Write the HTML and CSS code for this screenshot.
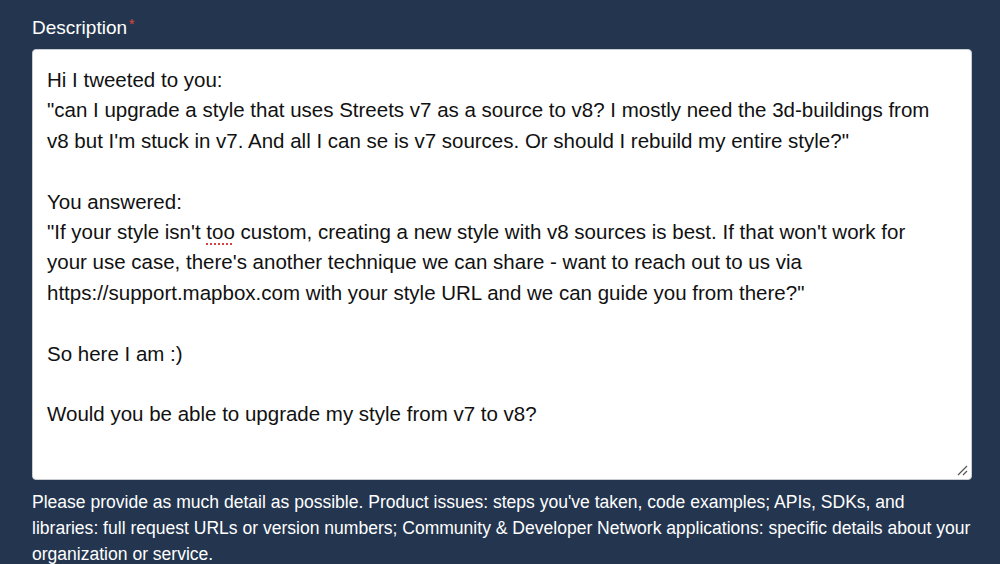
FILE: index.html
```html
<!DOCTYPE html>
<html lang="en">
<head>
<meta charset="utf-8">
<title>Description</title>
<link rel="stylesheet" href="styles.css">
</head>
<body>
<div class="field">
  <label class="label">Description<span class="req">*</span></label>
  <div class="textbox">
    <div class="content">Hi I tweeted to you:
"can I upgrade a style that uses Streets v7 as a source to v8? I mostly need the 3d-buildings from v8 but I'm stuck in v7. And all I can se is v7 sources. Or should I rebuild my entire style?"

You answered:
"If your style isn't <span class="spell">too</span> custom, creating a new style with v8 sources is best. If that won't work for your use case, there's another technique we can share - want to reach out to us via https://support.mapbox.com with your style URL and we can guide you from there?"

So here I am :)

Would you be able to upgrade my style from v7 to v8?</div>
    <svg class="grip" width="12" height="12" viewBox="0 0 12 12"><path d="M11 2 L2 11 M11 7 L7 11" stroke="#555" stroke-width="1.2" fill="none"/></svg>
  </div>
  <p class="help">Please provide as much detail as possible. Product issues: steps you've taken, code examples; APIs, SDKs, and<br>libraries: full request URLs or version numbers; Community &amp; Developer Network applications: specific details about your organization or service.</p>
</div>
</body>
</html>
```
FILE: styles.css
```css
html, body {
  margin: 0;
  padding: 0;
  background: #24364f;
  height: 100%;
  overflow: hidden;
}
body {
  font-family: "Liberation Sans", Arial, sans-serif;
}
.field {
  padding: 15px 26px 0 32px;
}
.label {
  display: block;
  color: #fff;
  font-size: 19px;
  line-height: 26px;
  margin-bottom: 8px;
}
.req {
  color: #e0463b;
  font-size: 14px;
  vertical-align: top;
  position: relative;
  top: -4px;
  margin-left: 2px;
}
.textbox {
  position: relative;
  background: #fff;
  border: 1px solid #c9ccd1;
  border-radius: 4px;
  height: 431px;
  margin-right: 2px;
  box-sizing: border-box;
  padding: 15px 28px 0 14px;
}
.content {
  white-space: pre-wrap;
  color: #111;
  font-size: 20.5px;
  line-height: 30.4px;
}
.spell {
  text-decoration: underline dotted #d94040;
  text-decoration-thickness: 2px;
  text-underline-offset: 4px;
}
.grip {
  position: absolute;
  right: 3px;
  bottom: 3px;
}
.help {
  margin: 9px -8px 0 0;
  color: #fff;
  font-size: 17.55px;
  line-height: 26px;
}
```
